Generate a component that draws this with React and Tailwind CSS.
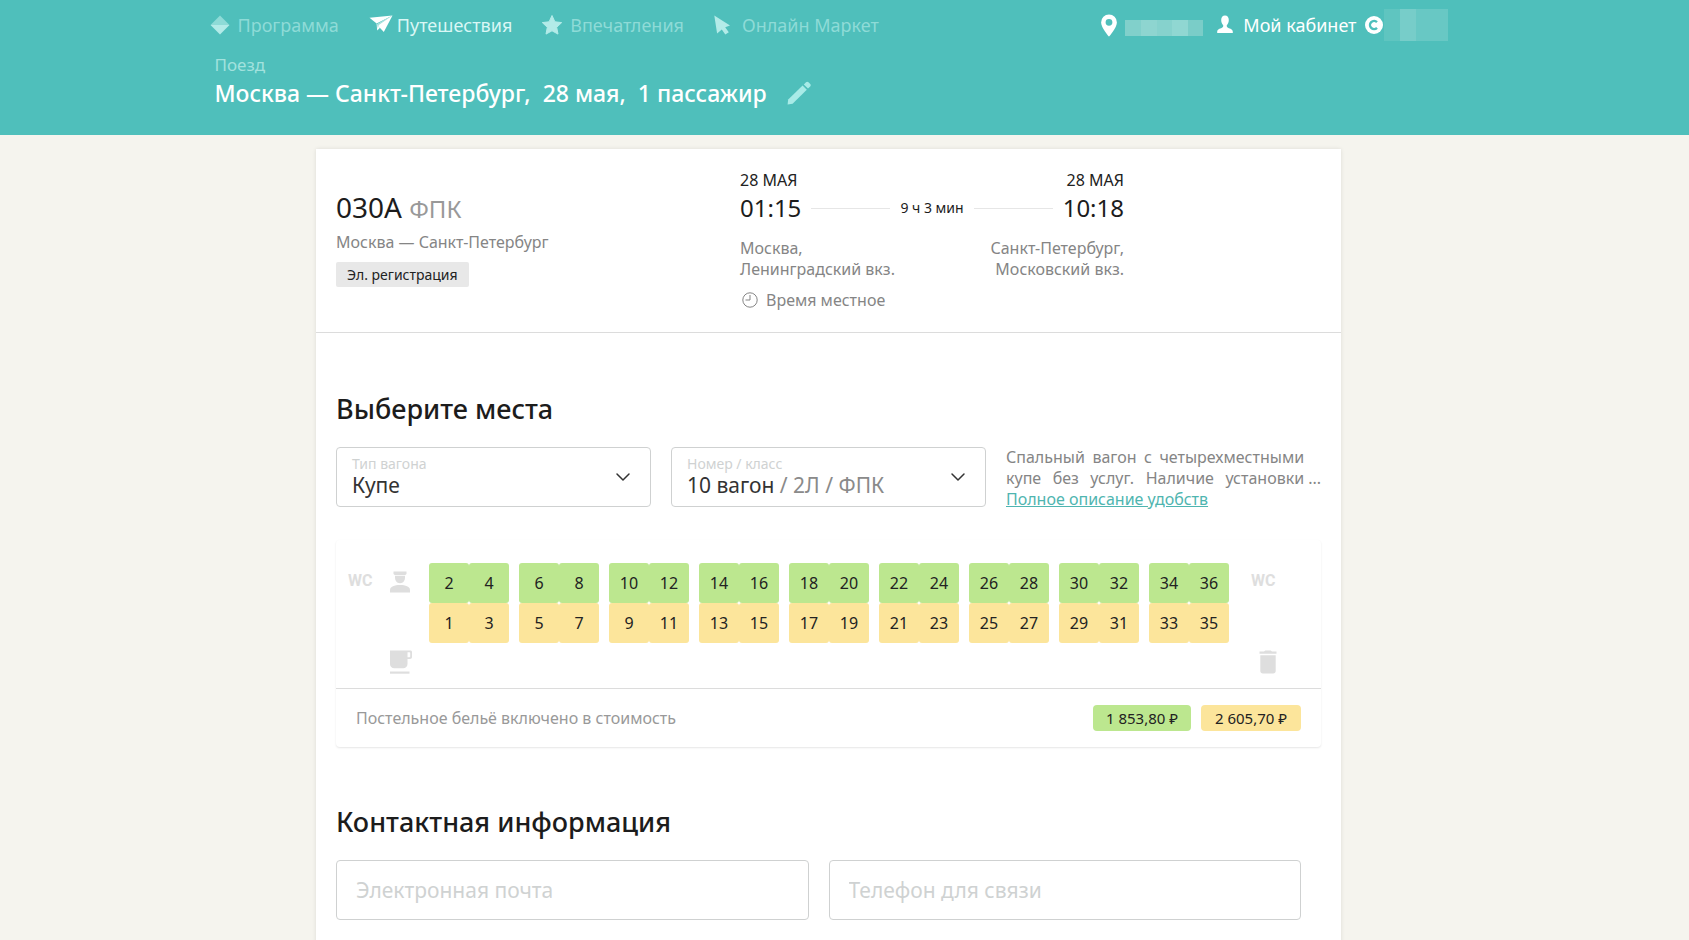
import React, { useState } from "react";
import { ChevronDown } from "lucide-react";

const coupes = Array.from({ length: 9 }, (_, i) => ({
  upper: [i * 4 + 2, i * 4 + 4],
  lower: [i * 4 + 1, i * 4 + 3],
}));

const DiamondIcon = () => (
  <svg className="h-5 w-5" viewBox="0 0 20 20" aria-hidden="true">
    <path d="M10 0.5 19.5 10H0.5z" fill="#8edbd7" />
    <path d="M0.5 10h19L10 19.5z" fill="#b3ebe8" />
  </svg>
);

const PlaneIcon = () => (
  <svg className="h-5 w-6" viewBox="0 0 24 20" aria-hidden="true">
    <path d="M0.5 2.8 23.5 0.6 7.6 8.6z" fill="#fff" />
    <path d="M23.5 0.6 14.8 17 7.8 9.4z" fill="#fff" />
    <path d="M7.6 8.6 8.2 15.6 11 12.8z" fill="#fff" />
    <path d="M22 1.6 8 9l.8 4.500 1-3.500z" fill="#a5e0dc" />
  </svg>
);

const StarIcon = () => (
  <svg className="h-5 w-5" viewBox="0 0 20 20" aria-hidden="true">
    <path
      d="M10 0.5l2.9 6.3 6.8.8-5 4.7 1.3 6.8L10 15.8l-6 3.3 1.3-6.8-5-4.7 6.8-.8z"
      fill="#b3ebe8"
      stroke="#b3ebe8"
      strokeLinejoin="round"
    />
  </svg>
);

const CursorIcon = () => (
  <svg className="h-5 w-4" viewBox="0 0 16 20" aria-hidden="true">
    <path d="M0.3 0.6 16 10.6l-4.8 1.6 3.600 5-3.500 2.400-3.500-5.200-4.700 4z" fill="#b3ebe8" />
  </svg>
);

const PinIcon = () => (
  <svg className="h-6 w-4" viewBox="0 0 16 24" aria-hidden="true">
    <path
      d="M8 1.5a7.9 7.9 0 0 0-7.9 7.9C0.1 14.6 8 23.5 8 23.5s7.9-8.9 7.9-14.1A7.9 7.9 0 0 0 8 1.5zm0 11.2a3.4 3.4 0 1 1 0-6.8 3.4 3.4 0 0 1 0 6.8z"
      fill="#fff"
    />
  </svg>
);

const PersonIcon = () => (
  <svg className="h-5 w-4" viewBox="0 0 16 20" aria-hidden="true">
    <path
      d="M8 0.5C5.5 0.5 4.2 2.3 4.2 5c0 2.3.9 4.2 2 5.3.2 1.2-.2 2-1.2 2.5C2.6 13.9.2 14.3.2 16.8V18h15.600v-1.200c0-2.500-2.400-2.900-4.800-4-1-.5-1.400-1.300-1.200-2.500 1.100-1.100 2-3 2-5.300C11.800 2.300 10.500.5 8 .5z"
      fill="#fff"
    />
  </svg>
);

const CoinIcon = () => (
  <svg className="h-[18px] w-[18px]" viewBox="0 0 18 18" aria-hidden="true">
    <circle cx="9" cy="9" r="9" fill="#fff" />
    <path
      d="M12 6.1A4.1 4.1 0 1 0 12 11.9"
      fill="none"
      stroke="#4fbfbb"
      strokeWidth="2.4"
    />
  </svg>
);

const PencilIcon = () => (
  <svg className="h-6 w-6" viewBox="0 0 24 24" aria-hidden="true">
    <g fill="#a8ebe7">
      <path d="M0.6 23.4 1.2 18.6 15.6 4.6l4.2 4.2L5.6 22.8z" />
      <path d="M16.8 3.4 19 1.2c.8-.8 1.8-.7 2.5 0l1.7 1.7c.7.7.8 1.7 0 2.5L21 7.6z" />
    </g>
  </svg>
);

const LocalTimeIcon = () => (
  <svg className="h-4 w-4" viewBox="0 0 16 16" fill="none" stroke="#858585" aria-hidden="true">
    <circle cx="8" cy="8" r="7.2" />
    <path d="M8 3v5H3.5" />
  </svg>
);

const ConductorIcon = () => (
  <svg className="h-[22px] w-5" viewBox="0 0 20 22" fill="#dedede" aria-hidden="true">
    <path d="M3.5 0.5h13v2.5l-1.5 1.2H5L3.5 3z" />
    <path d="M5 5h10v1.5c0 3-1.7 5.7-5 5.7S5 9.5 5 6.5z" />
    <path d="M0 21.5v-2.5c0-3.3 4.5-5 10-5s10 1.7 10 5v2.5z" />
  </svg>
);

const CupIcon = () => (
  <svg className="h-6 w-[22px]" viewBox="0 0 22 24" fill="#dedede" aria-hidden="true">
    <path
      fillRule="evenodd"
      d="M0 0.5h20.5c.9 0 1.5.6 1.5 1.5v5c0 1.2-.8 2-2 2h-2.5v5c0 2.5-1.8 4.3-4.3 4.3H4.3C1.8 18.3 0 16.5 0 14zM17.5 2.3v5h1.7c.7 0 1-.3 1-1V3.3c0-.7-.3-1-1-1z"
    />
    <path d="M0 21.5h19.5v2.2H0z" />
  </svg>
);

const TrashIcon = () => (
  <svg className="h-6 w-[18px]" viewBox="0 0 18 24" fill="#dedede" aria-hidden="true">
    <path d="M0.5 1.5h4.5L6.2 0.5h5.6L13 1.5h4.5v2.3h-17z" />
    <path d="M1.3 5.2h15.4v15.8c0 1.6-1 2.5-2.5 2.5H3.8c-1.5 0-2.5-.9-2.5-2.5z" />
  </svg>
);

const SelectField = ({ id, label, options, children }) => (
  <div className="relative">
    <label
      htmlFor={id}
      className="pointer-events-none absolute top-[9px] left-4 text-sm leading-4 text-[#cfd2d2]"
    >
      {label}
    </label>
    <select
      id={id}
      className={`h-[60px] w-full appearance-none rounded border border-[#cfd1d1] bg-white pt-[18px] pr-12 pl-[15px] text-[21px] outline-none ${
        children ? "text-transparent" : "text-[#333]"
      }`}
    >
      {options.map((option) => (
        <option key={option}>{option}</option>
      ))}
    </select>
    {children && (
      <span
        aria-hidden="true"
        className="pointer-events-none absolute top-6 left-4 text-[21px] leading-7 text-[#8a8a8a]"
      >
        {children}
      </span>
    )}
    <ChevronDown
      className="pointer-events-none absolute top-[18px] right-4 h-6 w-6 text-[#333]"
      strokeWidth={1.5}
    />
  </div>
);

const Seat = ({ number, color, selected, onSelect }) => (
  <button
    type="button"
    aria-pressed={selected}
    onClick={() => onSelect(number)}
    className={`h-10 w-10 cursor-pointer rounded-[3px] text-base text-[#222] ${color}`}
  >
    {number}
  </button>
);

const Header = () => (
  <header className="bg-[#4fbfbb] pr-8">
    <div className="mx-auto max-w-[1238px] pb-[30px]">
      <div className="flex h-[50px] items-center justify-between text-lg">
        <nav className="flex items-center gap-[30px] text-[#8edbd7]">
          <a href="#program" className="flex items-center gap-2">
            <DiamondIcon />
            Программа
          </a>
          <a href="#travel" className="flex items-center gap-1 text-[#d9f7f5]">
            <PlaneIcon />
            Путешествия
          </a>
          <a href="#impressions" className="flex items-center gap-2">
            <StarIcon />
            Впечатления
          </a>
          <a href="#market" className="flex items-center gap-3">
            <CursorIcon />
            Онлайн Маркет
          </a>
        </nav>
        <div className="flex items-center text-white">
          <PinIcon />
          <span className="mt-1.5 ml-2 flex h-4 w-[78px]">
            <span className="flex-1 bg-[#81d0cb]" />
            <span className="flex-1 bg-[#8ed5d0]" />
            <span className="flex-1 bg-[#86d2cd]" />
            <span className="flex-1 bg-[#90d7d2]" />
            <span className="flex-1 bg-[#7acdc8]" />
          </span>
          <a href="#account" className="ml-3.5 flex items-center gap-2.5">
            <PersonIcon />
            Мой кабинет
          </a>
          <span className="ml-2 flex items-center">
            <CoinIcon />
            <span className="ml-px flex h-8 w-16">
              <span className="w-4 bg-[#5fc5c0]" />
              <span className="w-4 bg-[#77cdc9]" />
              <span className="flex-1 bg-[#68c8c4]" />
            </span>
          </span>
        </div>
      </div>
      <div className="pt-[3px] pl-[5px]">
        <p className="text-[17px] leading-6 text-[#a2e2de]">Поезд</p>
        <div className="mt-1 flex items-center gap-5">
          <h1 className="flex gap-3 text-[23px] leading-6 font-medium text-white">
            <span>Москва — Санкт-Петербург,</span>
            <span>28 мая,</span>
            <span>1 пассажир</span>
          </h1>
          <button type="button" aria-label="Изменить поиск" className="cursor-pointer">
            <PencilIcon />
          </button>
        </div>
      </div>
    </div>
  </header>
);

const TripInfo = () => (
  <section className="flex h-[184px] border-b border-[#dcdcdc] px-5 pt-[19px]">
    <div className="w-[404px] pt-[21px]">
      <h2 className="text-[28px] leading-9 text-[#1c1c1c]">
        030А <span className="text-2xl text-[#999]">ФПК</span>
      </h2>
      <p className="mt-px text-base leading-8 text-[#858585]">Москва — Санкт-Петербург</p>
      <p className="mt-1 inline-block rounded-xs bg-[#e8e8e8] px-[11px] text-sm leading-[25px] text-[#222]">
        Эл. регистрация
      </p>
    </div>
    <div className="w-[384px]">
      <div className="flex justify-between text-base leading-6 text-[#222]">
        <span>28 МАЯ</span>
        <span>28 МАЯ</span>
      </div>
      <div className="flex items-center gap-2.5 text-[#1c1c1c]">
        <time className="text-2xl leading-8">01:15</time>
        <span className="h-px flex-1 bg-[#e6e6e6]" />
        <span className="text-sm">9 ч 3 мин</span>
        <span className="h-px flex-1 bg-[#e6e6e6]" />
        <time className="text-2xl leading-8">10:18</time>
      </div>
      <div className="mt-3.5 flex justify-between text-base leading-[21px] text-[#858585]">
        <p>
          Москва,
          <br />
          Ленинградский вкз.
        </p>
        <p className="text-right">
          Санкт-Петербург,
          <br />
          Московский вкз.
        </p>
      </div>
      <p className="mt-2 flex items-center gap-2 pl-0.5 text-base text-[#858585]">
        <LocalTimeIcon />
        Время местное
      </p>
    </div>
  </section>
);

const SeatMap = () => {
  const [selected, setSelected] = useState(null);

  return (
    <div className="mt-[30px] rounded shadow-[0_1px_2px_rgba(0,0,0,0.1)]">
      <div className="flex h-[149px] border-b border-[#dcdcdc] pt-[23px]">
        <div className="flex w-[93px] gap-[18px] pt-1.5 pl-3 font-[Roboto,sans-serif]">
          <span className="text-base font-bold text-[#dedede]">WC</span>
          <div className="flex flex-col gap-[57px] pt-0.5">
            <ConductorIcon />
            <CupIcon />
          </div>
        </div>
        <div className="flex gap-2.5">
          {coupes.map((coupe) => (
            <div key={coupe.lower[0]} className="grid h-20 w-20 grid-cols-2">
              {coupe.upper.map((number) => (
                <Seat
                  key={number}
                  number={number}
                  color="bg-[#bce78f]"
                  selected={selected === number}
                  onSelect={setSelected}
                />
              ))}
              {coupe.lower.map((number) => (
                <Seat
                  key={number}
                  number={number}
                  color="bg-[#fce59b]"
                  selected={selected === number}
                  onSelect={setSelected}
                />
              ))}
            </div>
          ))}
        </div>
        <div className="flex flex-col gap-[57px] pt-1.5 pl-[22px] font-[Roboto,sans-serif]">
          <span className="text-base font-bold text-[#dedede]">WC</span>
          <div className="pl-2">
            <TrashIcon />
          </div>
        </div>
      </div>
      <div className="flex h-[58px] items-center justify-between px-5">
        <p className="text-base text-[#999]">Постельное бельё включено в стоимость</p>
        <div className="flex gap-2.5 text-[15px] leading-[26px] text-[#222]">
          <span className="rounded bg-[#bce78f] px-[13px]">1 853,80 ₽</span>
          <span className="rounded bg-[#fce59b] px-3.5">2 605,70 ₽</span>
        </div>
      </div>
    </div>
  );
};

const App = () => {
  return (
    <div className="flex min-h-screen flex-col bg-[#f5f4ee] font-['Noto_Sans',sans-serif]">
      <Header />
      <main className="flex flex-1 pt-3.5 pr-8">
        <div className="mx-auto w-full max-w-[1025px] bg-white shadow-[0_0_4px_rgba(0,0,0,0.1)]">
          <TripInfo />
          <section className="px-5 pt-14">
            <h2 className="text-[27px] leading-10 font-medium text-[#1c1c1c]">Выберите места</h2>
            <div className="mt-[18px] grid grid-cols-3 gap-5">
              <SelectField id="car-type" label="Тип вагона" options={["Купе", "Плацкарт", "СВ"]} />
              <SelectField
                id="car-number"
                label="Номер / класс"
                options={["10 вагон / 2Л / ФПК"]}
              >
                <span className="text-[#333]">10 вагон</span> / 2Л / ФПК
              </SelectField>
              <div className="text-base leading-[21px]">
                <div className="flex items-end gap-1 text-[#858585]">
                  <p className="flex-1 text-justify [text-align-last:justify]">
                    Спальный вагон с четырехместными купе без услуг. Наличие установки
                  </p>
                  <span>...</span>
                </div>
                <a href="#amenities" className="text-[#4fb5b0] underline">
                  Полное описание удобств
                </a>
              </div>
            </div>
            <SeatMap />
          </section>
          <section className="px-5 pt-[55px] pb-6">
            <h2 className="text-[27px] leading-10 font-medium text-[#1c1c1c]">
              Контактная информация
            </h2>
            <div className="mt-[18px] grid grid-cols-2 gap-5 pr-5">
              <input
                type="email"
                aria-label="Электронная почта"
                placeholder="Электронная почта"
                className="h-[60px] rounded border border-[#cfd1d1] px-[19px] text-[21px] outline-none placeholder:text-[#cfd2d2]"
              />
              <input
                type="tel"
                aria-label="Телефон для связи"
                placeholder="Телефон для связи"
                className="h-[60px] rounded border border-[#cfd1d1] px-[19px] text-[21px] outline-none placeholder:text-[#cfd2d2]"
              />
            </div>
          </section>
        </div>
      </main>
    </div>
  );
};

export default App;
